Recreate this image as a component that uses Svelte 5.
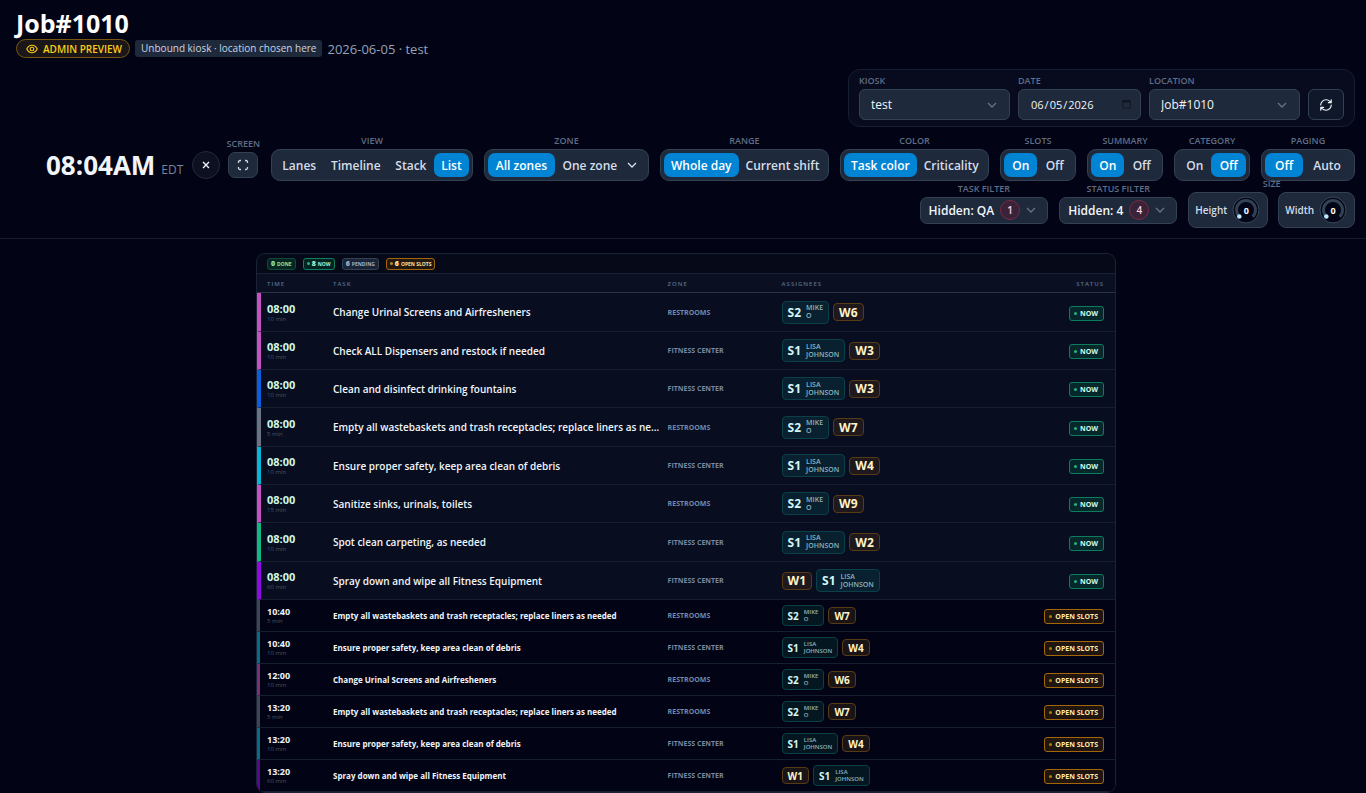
<script lang="ts">
    type Assignee = { slot: string; name?: string[] };

    interface Task {
        time: string;
        mins: number;
        title: string;
        zone: string;
        color: string;
        assignees: Assignee[];
        now?: boolean;
    }

    const mike: Assignee = { slot: 'S2', name: ['Mike', 'O'] };
    const lisa: Assignee = { slot: 'S1', name: ['Lisa', 'Johnson'] };
    const open = (slot: string): Assignee => ({ slot });

    const PINK = '#c850c0';
    const BLUE = '#0a5fe0';
    const GRAY = '#6b7280';
    const CYAN = '#06b6d4';
    const GREEN = '#10b981';
    const PURPLE = '#9208e8';

    const wastebaskets = 'Empty all wastebaskets and trash receptacles; replace liners as needed';
    const safety = 'Ensure proper safety, keep area clean of debris';
    const screens = 'Change Urinal Screens and Airfresheners';
    const equipment = 'Spray down and wipe all Fitness Equipment';

    const tasks: Task[] = [
        { time: '08:00', mins: 10, title: screens, zone: 'Restrooms', color: PINK, assignees: [mike, open('W6')], now: true },
        { time: '08:00', mins: 10, title: 'Check ALL Dispensers and restock if needed', zone: 'Fitness Center', color: PINK, assignees: [lisa, open('W3')], now: true },
        { time: '08:00', mins: 10, title: 'Clean and disinfect drinking fountains', zone: 'Fitness Center', color: BLUE, assignees: [lisa, open('W3')], now: true },
        { time: '08:00', mins: 5, title: wastebaskets, zone: 'Restrooms', color: GRAY, assignees: [mike, open('W7')], now: true },
        { time: '08:00', mins: 10, title: safety, zone: 'Fitness Center', color: CYAN, assignees: [lisa, open('W4')], now: true },
        { time: '08:00', mins: 15, title: 'Sanitize sinks, urinals, toilets', zone: 'Restrooms', color: PINK, assignees: [mike, open('W9')], now: true },
        { time: '08:00', mins: 10, title: 'Spot clean carpeting, as needed', zone: 'Fitness Center', color: GREEN, assignees: [lisa, open('W2')], now: true },
        { time: '08:00', mins: 60, title: equipment, zone: 'Fitness Center', color: PURPLE, assignees: [open('W1'), lisa], now: true },
        { time: '10:40', mins: 5, title: wastebaskets, zone: 'Restrooms', color: GRAY, assignees: [mike, open('W7')] },
        { time: '10:40', mins: 10, title: safety, zone: 'Fitness Center', color: CYAN, assignees: [lisa, open('W4')] },
        { time: '12:00', mins: 10, title: screens, zone: 'Restrooms', color: PINK, assignees: [mike, open('W6')] },
        { time: '13:20', mins: 5, title: wastebaskets, zone: 'Restrooms', color: GRAY, assignees: [mike, open('W7')] },
        { time: '13:20', mins: 10, title: safety, zone: 'Fitness Center', color: CYAN, assignees: [lisa, open('W4')] },
        { time: '13:20', mins: 60, title: equipment, zone: 'Fitness Center', color: PURPLE, assignees: [open('W1'), lisa] }
    ];

    let groups = $state([
        { label: 'View', size: 'view', options: ['Lanes', 'Timeline', 'Stack', 'List'], value: 'List' },
        { label: 'Zone', size: 'zone', options: ['All zones', 'One zone'], value: 'All zones', menu: true },
        { label: 'Range', size: 'range', options: ['Whole day', 'Current shift'], value: 'Whole day' },
        { label: 'Color', size: 'color', options: ['Task color', 'Criticality'], value: 'Task color' },
        { label: 'Slots', size: 'toggle', options: ['On', 'Off'], value: 'On' },
        { label: 'Summary', size: 'toggle', options: ['On', 'Off'], value: 'On' },
        { label: 'Category', size: 'toggle', options: ['On', 'Off'], value: 'Off' },
        { label: 'Paging', size: 'paging', options: ['Off', 'Auto'], value: 'Off' }
    ]);

    const filters = [
        { label: 'Task filter', text: 'Hidden: QA', count: 1 },
        { label: 'Status filter', text: 'Hidden: 4', count: 4 }
    ];

    let date = $state('2026-06-05');
</script>

{#snippet chevron()}
    <svg class="chevron" viewBox="0 0 10 10" width="10" height="10" aria-hidden="true">
        <path d="M1 3l4 4 4-4" fill="none" stroke="currentColor" stroke-width="1.3" />
    </svg>
{/snippet}

<header>
    <h1>Job#1010</h1>
    <div class="meta">
        <span class="preview">
            <svg viewBox="0 0 24 24" width="12" height="12" fill="none" stroke="currentColor" stroke-width="2.2" aria-hidden="true">
                <path d="M1.5 12C4 7 7.600 4.500 12 4.500S20 7 22.500 12C20 17 16.400 19.500 12 19.500S4 17 1.500 12z" />
                <circle cx="12" cy="12" r="3.600" />
            </svg>
            ADMIN PREVIEW
        </span>
        <span class="unbound">Unbound kiosk · location chosen here</span>
        <span class="when">2026-06-05 · test</span>
    </div>

    <div class="picker">
        <div class="field wide">
            <label class="caption" for="kiosk">Kiosk</label>
            <div class="select">
                <select id="kiosk"><option>test</option></select>
                {@render chevron()}
            </div>
        </div>
        <div class="field">
            <label class="caption" for="date">Date</label>
            <input id="date" type="date" bind:value={date} />
        </div>
        <div class="field wide">
            <label class="caption" for="location">Location</label>
            <div class="select">
                <select id="location"><option>Job#1010</option></select>
                {@render chevron()}
            </div>
        </div>
        <button class="refresh" aria-label="Refresh">
            <svg viewBox="0 0 24 24" width="14" height="14" fill="none" stroke="currentColor" stroke-width="2" stroke-linecap="round" stroke-linejoin="round">
                <path d="M3 12a9 9 0 0 1 9-9 9.750 9.750 0 0 1 6.740 2.740L21 8M21 3v5h-5" />
                <path d="M21 12a9 9 0 0 1-9 9 9.750 9.750 0 0 1-6.740-2.740L3 16M8 16H3v5" />
            </svg>
        </button>
    </div>

    <div class="bar">
        <div class="clock">
            <time>08:04AM</time>
            <small>EDT</small>
            <button class="close" aria-label="Close">
                <svg viewBox="0 0 8 8" width="8" height="8" aria-hidden="true">
                    <path d="M1 1l6 6M7 1L1 7" stroke="currentColor" stroke-width="1.4" />
                </svg>
            </button>
        </div>

        <div class="toolbar">
            <div class="control">
                <span class="caption">Screen</span>
                <button class="fullscreen" aria-label="Full screen">
                    <svg viewBox="0 0 12 12" width="12" height="12" fill="none" stroke="currentColor" stroke-width="1.3" aria-hidden="true">
                        <path d="M1.500 4V3q0-1.500 1.500-1.500h1M8 1.500h1q1.500 0 1.500 1.500v1M10.500 8v1q0 1.500-1.500 1.500h-1M4 10.500h-1q-1.500 0-1.500-1.500v-1" />
                    </svg>
                </button>
            </div>
            {#each groups as group}
                <div class="control">
                    <span class="caption">{group.label}</span>
                    <div class="segments {group.size}" role="group" aria-label={group.label}>
                        {#each group.options as option, i}
                            <button class:active={group.value === option} onclick={() => (group.value = option)}>
                                {option}
                                {#if group.menu && i === 1}{@render chevron()}{/if}
                            </button>
                        {/each}
                    </div>
                </div>
            {/each}
            {#each filters as filter}
                <div class="control">
                    <span class="caption">{filter.label}</span>
                    <button class="filter">
                        {filter.text}
                        <span class="count">{filter.count}</span>
                        {@render chevron()}
                    </button>
                </div>
            {/each}
            <div class="control">
                <span class="caption">Size</span>
                <div class="sizes">
                    {#each ['Height', 'Width'] as axis}
                        <div class="size">
                            {axis}
                            <div class="knob" role="slider" tabindex="0" aria-label={axis} aria-valuenow={0} aria-valuemin={0} aria-valuemax={10}>
                                <svg viewBox="0 0 28 28" width="28" height="28" aria-hidden="true">
                                    <circle cx="14" cy="14" r="13" fill="#020617" stroke="#3a475b" />
                                    <path d="M7.300 20.700A9.500 9.500 0 1 1 20.700 20.700" fill="none" stroke="#334155" stroke-width="3" />
                                    <circle cx="7.300" cy="20.500" r="2.300" fill="#bae6fd" />
                                </svg>
                                <span>0</span>
                            </div>
                        </div>
                    {/each}
                </div>
            </div>
        </div>
    </div>
</header>

<main>
    <section class="board">
        <div class="summary">
            <span class="tally done"><b>0</b> Done</span>
            <span class="tally now"><i></i><b>8</b> Now</span>
            <span class="tally pending"><b>6</b> Pending</span>
            <span class="tally slots"><i></i><b>6</b> Open slots</span>
        </div>
        <table>
            <thead>
                <tr>
                    <th class="time">Time</th>
                    <th class="task">Task</th>
                    <th class="zone">Zone</th>
                    <th class="assignees">Assignees</th>
                    <th class="status">Status</th>
                </tr>
            </thead>
            <tbody>
                {#each tasks as task}
                    <tr class:current={task.now} style="--bar: {task.color}">
                        <td class="time">
                            <strong>{task.time}</strong>
                            <small>{task.mins} min</small>
                        </td>
                        <td class="task">{task.title}</td>
                        <td class="zone">{task.zone}</td>
                        <td>
                            <div class="chips">
                                {#each task.assignees as person}
                                    <span class="chip" class:vacant={!person.name}>
                                        {person.slot}
                                        {#if person.name}
                                            <span class="name">{person.name[0]}<br />{person.name[1]}</span>
                                        {/if}
                                    </span>
                                {/each}
                            </div>
                        </td>
                        <td class="status">
                            <span class="badge"><i></i>{task.now ? 'Now' : 'Open slots'}</span>
                        </td>
                    </tr>
                {/each}
            </tbody>
        </table>
    </section>
</main>

<style>
    :global(body) {
        margin: 0;
        background: #020314;
        color: #f1f5f9;
        font-family: "Segoe UI", "Open Sans", "Noto Sans", sans-serif;
        font-size: 12px;
    }

    button,
    select,
    input {
        box-sizing: border-box;
        margin: 0;
        border: 1px solid #334155;
        background: #1e293b;
        color: inherit;
        font: inherit;
    }

    svg {
        display: block;
        flex: none;
    }

    header {
        padding: 8px 11px 10px 16px;
        border-bottom: 1px solid #151c2f;
    }

    h1 {
        margin: 0;
        font-size: 25px;
        line-height: 31px;
        font-weight: 700;
        color: #fff;
    }

    .meta {
        display: flex;
        align-items: center;
        gap: 5px;
        height: 19px;
        white-space: nowrap;
    }

    .preview {
        display: flex;
        align-items: center;
        gap: 5px;
        box-sizing: border-box;
        height: 19px;
        padding: 0 7px 0 9px;
        border: 1px solid #7a5510;
        border-radius: 10px;
        background: #1b1719;
        color: #facc15;
        font-size: 10px;
        font-weight: 600;
    }

    .unbound {
        padding: 0 6px;
        border-radius: 3px;
        background: #1e293b;
        color: #cbd5e1;
        font-size: 10px;
        line-height: 17px;
    }

    .when {
        color: #94a3b8;
        font-size: 13px;
    }

    .caption {
        color: #5f6e87;
        font-size: 9px;
        line-height: 6px;
        font-weight: 600;
        text-transform: uppercase;
        white-space: nowrap;
    }

    .picker {
        display: flex;
        align-items: flex-end;
        gap: 8px;
        box-sizing: border-box;
        width: fit-content;
        height: 58px;
        margin: 11px 0 0 auto;
        padding: 0 10px 6px;
        border: 1px solid #171f33;
        border-radius: 12px;
        background: #070b1d;
    }

    .field {
        display: flex;
        flex-direction: column;
        gap: 5px;
        width: 123px;
    }

    .field.wide {
        width: 151px;
    }

    .select {
        position: relative;
    }

    .select .chevron {
        position: absolute;
        top: 11px;
        right: 13px;
        color: #64748b;
        pointer-events: none;
    }

    select,
    input {
        width: 100%;
        height: 31px;
        padding: 0 11px;
        border-radius: 6px;
        appearance: none;
    }

    input {
        padding-right: 6px;
        font-size: 11px;
    }

    input::-webkit-calendar-picker-indicator {
        opacity: 0.5;
    }

    .refresh {
        display: grid;
        place-items: center;
        width: 36px;
        height: 31px;
        padding: 0;
        border-radius: 6px;
        background: #0f172a;
    }

    .bar {
        display: flex;
        align-items: flex-start;
        margin-top: 11px;
    }

    .clock {
        display: flex;
        align-items: center;
        gap: 6px;
        height: 32px;
        margin: 11px 0 0 30px;
    }

    .clock time {
        font-size: 26px;
        font-weight: 700;
    }

    .clock small {
        padding-top: 8px;
        color: #77869d;
        font-size: 12px;
    }

    .close {
        display: grid;
        place-items: center;
        width: 28px;
        height: 28px;
        margin-left: 3px;
        padding: 0;
        border-color: #242b3c;
        border-radius: 50%;
        background: #0c1020;
    }

    .toolbar {
        flex: 1;
        display: flex;
        flex-wrap: wrap;
        align-items: center;
        justify-content: flex-end;
        column-gap: 11px;
    }

    .control {
        display: flex;
        flex-direction: column;
        align-items: center;
        gap: 5px;
    }

    .fullscreen {
        display: grid;
        place-items: center;
        width: 30px;
        height: 26px;
        padding: 0;
        border-radius: 7px;
        color: #cbd5e1;
    }

    .segments {
        display: flex;
        box-sizing: border-box;
        height: 32px;
        padding: 3px;
        border: 1px solid #334155;
        border-radius: 9px;
        background: #1e293b;
    }

    .segments button {
        flex: auto;
        display: flex;
        align-items: center;
        justify-content: center;
        gap: 10px;
        padding: 0 7px;
        border: 0;
        border-radius: 7px;
        background: none;
        color: #d5dde8;
        font-weight: 600;
        white-space: nowrap;
    }

    .segments .active {
        background: #0284d4;
        color: #fff;
    }

    .segments.view {
        width: 202px;
    }

    .segments.zone {
        width: 165px;
    }

    .segments.range {
        width: 169px;
    }

    .segments.color {
        width: 149px;
    }

    .segments.toggle {
        width: 76px;
    }

    .segments.paging {
        width: 94px;
    }

    .filter {
        display: flex;
        align-items: center;
        gap: 6px;
        height: 27px;
        padding: 0 11px 0 8px;
        border-radius: 7px;
        font-weight: 600;
    }

    .filter .chevron {
        color: #64748b;
    }

    .count {
        box-sizing: border-box;
        width: 20px;
        border: 1px solid #7b2b47;
        border-radius: 10px;
        background: #3a2238;
        color: #fbcfe0;
        font-size: 10px;
        line-height: 18px;
        text-align: center;
    }

    .sizes {
        display: flex;
        gap: 10px;
    }

    .size {
        display: flex;
        align-items: center;
        gap: 5px;
        box-sizing: border-box;
        height: 36px;
        padding: 0 7px 0 6px;
        border: 1px solid #334155;
        border-radius: 8px;
        background: #1e293b;
        color: #d5dde8;
        font-size: 10px;
        font-weight: 600;
    }

    .knob {
        display: grid;
        place-items: center;
        color: #fff;
        font-size: 9px;
        font-weight: 700;
    }

    .knob > * {
        grid-area: 1 / 1;
    }

    main {
        display: flex;
        justify-content: center;
        padding: 14px 0 0 6px;
    }

    .board {
        box-sizing: border-box;
        width: 100%;
        max-width: 860px;
        overflow: hidden;
        border: 1px solid #1a2236;
        border-radius: 9px;
        background: #050918;
    }

    .summary {
        display: flex;
        align-items: center;
        gap: 7px;
        height: 19px;
        padding-left: 10px;
    }

    .tally {
        display: flex;
        align-items: center;
        gap: 2px;
        box-sizing: border-box;
        height: 12px;
        padding: 0 3px;
        border: 1px solid;
        border-radius: 3px;
        font-size: 5px;
        font-weight: 700;
        text-transform: uppercase;
        white-space: nowrap;
    }

    .tally b {
        font-size: 7px;
    }

    i {
        width: 3px;
        height: 3px;
        border-radius: 50%;
        background: currentColor;
        opacity: 0.8;
    }

    .tally.done {
        border-color: #0d4a40;
        background: #06271f;
        color: #86e5bb;
    }

    .tally.now {
        border-color: #0d8062;
        background: #04221f;
        color: #a7f3d0;
    }

    .tally.pending {
        border-color: #334155;
        background: #1a2337;
        color: #a3b1c6;
    }

    .tally.slots {
        border-color: #a3670b;
        background: #23180f;
        color: #fde5a4;
    }

    .tally.now i {
        background: #34d399;
    }

    .tally.slots i {
        background: #d9a51c;
    }

    table {
        width: 100%;
        border-collapse: separate;
        border-spacing: 0;
        table-layout: fixed;
    }

    th,
    td {
        box-sizing: border-box;
        padding: 0;
        border-bottom: 1px solid #161e31;
        text-align: left;
    }

    th {
        height: 20px;
        padding-top: 2px;
        border-top: 1px solid #1a2236;
        border-bottom-color: #2a3448;
        background: #0a1022;
        color: #5d6e89;
        font-size: 6px;
        font-weight: 600;
        letter-spacing: 1px;
        text-transform: uppercase;
    }

    th.time {
        width: 76px;
        padding-left: 10px;
    }

    th.task {
        width: 39%;
    }

    th.zone {
        width: 114px;
    }

    th.status {
        width: 90px;
    }

    td {
        height: 32px;
        background: #020314;
    }

    .current td {
        height: 38px;
        background: #080d20;
    }

    .current:nth-child(3n + 1) td {
        height: 39px;
    }

    td.time {
        padding-left: 7px;
        border-left: 3px solid color-mix(in srgb, var(--bar) 60%, #020314);
        line-height: 1;
    }

    .current td.time {
        padding-left: 6px;
        border-left: 4px solid var(--bar);
    }

    .time strong {
        display: block;
        font-size: 9px;
        line-height: 10px;
        font-weight: 700;
    }

    .time small {
        display: block;
        color: #46536d;
        font-size: 6px;
        line-height: 8px;
    }

    .current .time strong {
        color: #d1fae5;
        font-size: 11px;
        line-height: 13px;
    }

    td.task {
        overflow: hidden;
        padding-right: 6px;
        color: #f1f5f9;
        font-size: 8px;
        font-weight: 700;
        text-overflow: ellipsis;
        white-space: nowrap;
    }

    .current td.task {
        font-size: 10px;
        font-weight: 600;
    }

    td.zone {
        color: #7488a6;
        font-size: 7px;
        font-weight: 700;
        text-transform: uppercase;
    }

    .chips {
        display: flex;
        align-items: center;
        gap: 4px;
    }

    .chip {
        display: flex;
        align-items: center;
        gap: 5px;
        box-sizing: border-box;
        height: 21px;
        padding: 0 5px;
        border: 1px solid #0b4048;
        border-radius: 4px;
        background: #041720;
        color: #d5f5f6;
        font-size: 10px;
        font-weight: 700;
    }

    .name {
        color: #8fb4bd;
        font-size: 6px;
        line-height: 7px;
        font-weight: 600;
        text-transform: uppercase;
    }

    .vacant {
        height: 17px;
        border-color: #583a14;
        background: #1a1417;
        color: #fef3c7;
    }

    .current .chip {
        height: 23px;
        background: #08202f;
        font-size: 12px;
    }

    .current .name {
        font-size: 7px;
        line-height: 8px;
    }

    .current .vacant {
        height: 18px;
        background: #1f191e;
    }

    .status {
        padding-right: 11px;
        text-align: right;
    }

    .badge {
        display: inline-flex;
        align-items: center;
        gap: 3px;
        box-sizing: border-box;
        height: 15px;
        padding: 0 5px 0 4px;
        border: 1px solid #a3670b;
        border-radius: 3px;
        background: #21160f;
        color: #fde9b0;
        font-size: 7px;
        font-weight: 700;
        text-transform: uppercase;
        vertical-align: middle;
        white-space: nowrap;
    }

    .current .badge {
        border-color: #0d7d62;
        background: #06282b;
        color: #d1fae5;
    }

    .badge i {
        background: #c79a1a;
    }

    .current .badge i {
        background: #34d399;
    }
</style>
